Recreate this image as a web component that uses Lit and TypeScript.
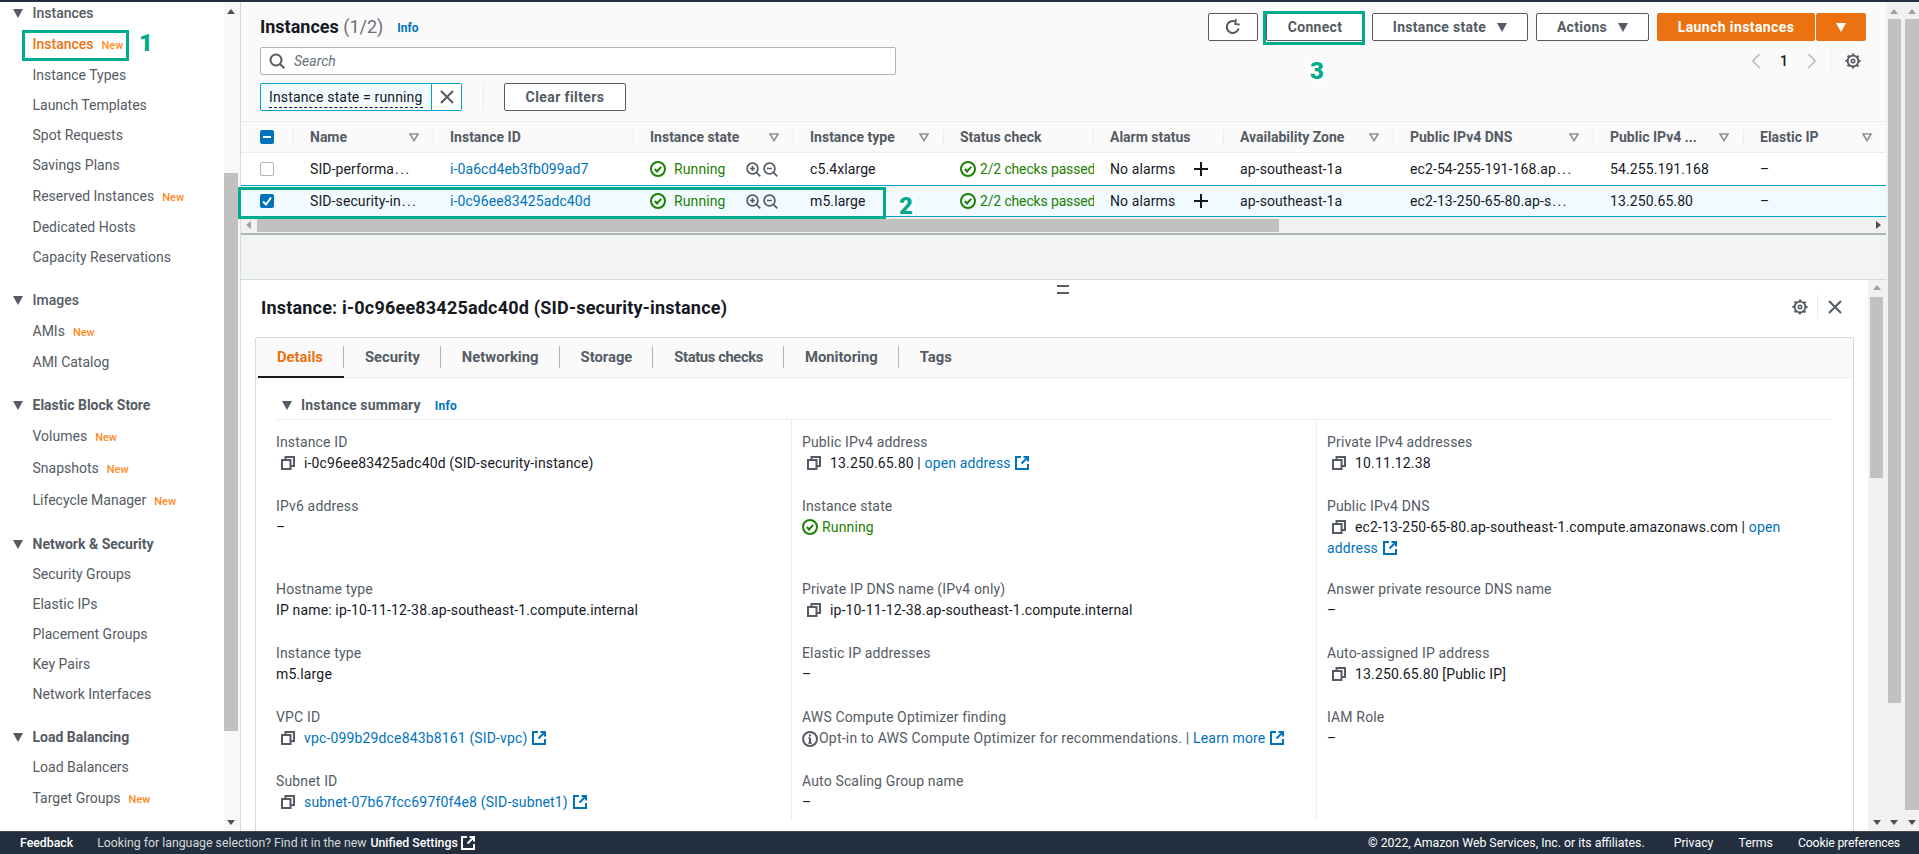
import { LitElement, html, css, svg, TemplateResult } from "lit";
import { customElement } from "lit/decorators.js";

const copyIcon = html`<svg class="copy" viewBox="0 0 14 14" width="14" height="14" fill="none" stroke="#545b64" stroke-width="2"><rect x="1" y="4" width="8.5" height="9"/><path d="M4.5 4V1H13v9h-3.5"/></svg>`;
const extIcon = html`<svg class="ext" viewBox="0 0 14 14" width="14" height="14" fill="none" stroke="currentColor" stroke-width="2"><path d="M6 1H1v12h12V8"/><path d="M8.5 1H13v4.5M13 1 6.5 7.5"/></svg>`;
const okIcon = html`<svg class="ok" viewBox="0 0 16 16" width="16" height="16" fill="none" stroke="#1d8102" stroke-width="2"><circle cx="8" cy="8" r="7"/><path d="M4.8 8l2.3 2.4 4-4.6"/></svg>`;
const gearIcon = html`<svg viewBox="0 0 16 16" width="16" height="16" fill="none" stroke="#545b64"><circle cx="8" cy="8" r="5.4" stroke-width="1.9"/><circle cx="8" cy="8" r="1.7" stroke-width="1.6"/><circle cx="8" cy="8" r="6.8" stroke-width="1.6" stroke-dasharray="2.2 3.14" stroke-dashoffset="1.1"/></svg>`;
const filterIcon = html`<svg class="tri" viewBox="0 0 10 9" width="10" height="9" fill="none" stroke="#879596" stroke-width="1.7"><path d="M1 1h8L5 7.6z"/></svg>`;
const caret = (color: string) => html`<svg viewBox="0 0 10 9" width="10" height="9"><path d="M0 0h10L5 9z" fill=${color}/></svg>`;
const zoomGlass = (minus: boolean) => html`<svg viewBox="0 0 15 15" width="15" height="15" fill="none" stroke="#545b64" stroke-width="1.7"><circle cx="6.5" cy="6.5" r="5.4"/><path d="M10.5 10.5 14.3 14.3M4 6.5h5"/>${minus ? "" : svg`<path d="M6.5 4v5"/>`}</svg>`;
const plusIcon = html`<svg viewBox="0 0 14 14" width="14" height="14" stroke="#16191f" stroke-width="2"><path d="M7 0v14M0 7h14"/></svg>`;
const link = (t: string) => html`<a>${t}</a>`;
const cut = (t: string) => html`${t}<span class="dots">...</span>`;

type Row = { label: string; value: TemplateResult | string };

const details: Row[] = [
  { label: "Instance ID", value: html`${copyIcon}i-0c96ee83425adc40d (SID-security-instance)` },
  { label: "Public IPv4 address", value: html`${copyIcon}13.250.65.80 | <a>open address ${extIcon}</a>` },
  { label: "Private IPv4 addresses", value: html`${copyIcon}10.11.12.38` },
  { label: "IPv6 address", value: "–" },
  { label: "Instance state", value: html`<span class="run">${okIcon} Running</span>` },
  { label: "Public IPv4 DNS", value: html`${copyIcon}ec2-13-250-65-80.ap-southeast-1.compute.amazonaws.com | <a>open<br />address ${extIcon}</a>` },
  { label: "Hostname type", value: "IP name: ip-10-11-12-38.ap-southeast-1.compute.internal" },
  { label: "Private IP DNS name (IPv4 only)", value: html`${copyIcon}ip-10-11-12-38.ap-southeast-1.compute.internal` },
  { label: "Answer private resource DNS name", value: "–" },
  { label: "Instance type", value: "m5.large" },
  { label: "Elastic IP addresses", value: "–" },
  { label: "Auto-assigned IP address", value: html`${copyIcon}13.250.65.80 [Public IP]` },
  { label: "VPC ID", value: html`${copyIcon}<a>vpc-099b29dce843b8161 (SID-vpc) ${extIcon}</a>` },
  {
    label: "AWS Compute Optimizer finding",
    value: html`<span class="opt"><svg class="info" viewBox="0 0 16 16" width="16" height="16" fill="none" stroke="#545b64" stroke-width="2"><circle cx="8" cy="8" r="7"/><path d="M8 7v5M6.5 12h3M6.5 7H8M8 3.5v2"/></svg>Opt-in to AWS Compute Optimizer for recommendations. | </span><a>Learn more ${extIcon}</a>`,
  },
  { label: "IAM Role", value: "–" },
  { label: "Subnet ID", value: html`${copyIcon}<a>subnet-07b67fcc697f0f4e8 (SID-subnet1) ${extIcon}</a>` },
  { label: "Auto Scaling Group name", value: "–" },
];

const nav = [
  { title: "Instances", light: true, items: [["Instances", 1, 1], ["Instance Types"], ["Launch Templates"], ["Spot Requests"], ["Savings Plans"], ["Reserved Instances", 1], ["Dedicated Hosts"], ["Capacity Reservations"]] },
  { title: "Images", light: true, items: [["AMIs", 1], ["AMI Catalog"]] },
  { title: "Elastic Block Store", items: [["Volumes", 1], ["Snapshots", 1], ["Lifecycle Manager", 1]] },
  { title: "Network & Security", items: [["Security Groups"], ["Elastic IPs"], ["Placement Groups"], ["Key Pairs"], ["Network Interfaces"]] },
  { title: "Load Balancing", items: [["Load Balancers"], ["Target Groups", 1]] },
];

const columns = [
  ["Name", true], ["Instance ID", false], ["Instance state", true], ["Instance type", true], ["Status check", false],
  ["Alarm status", false], ["Availability Zone", true], ["Public IPv4 DNS", true], ["Public IPv4 ...", true], ["Elastic IP", true],
];

const rows = [
  { name: "SID-performa", id: "i-0a6cd4eb3fb099ad7", type: "c5.4xlarge", dns: "ec2-54-255-191-168.ap", ip: "54.255.191.168" },
  { name: "SID-security-in", id: "i-0c96ee83425adc40d", type: "m5.large", dns: "ec2-13-250-65-80.ap-s", ip: "13.250.65.80", selected: true },
];

@customElement("app-root")
export class AppRoot extends LitElement {
  static styles = css`
    :host {
      display: block;
      position: relative;
      width: 100%;
      height: 100vh;
      overflow: hidden;
      font-family: Roboto, "Noto Sans", sans-serif;
      font-size: 14px;
      line-height: 21px;
      color: #16191f;
      background: #fff;
    }
    a { color: #0073bb; text-decoration: none; }
    svg { flex: none; }

    .page { display: flex; flex-direction: column; height: 100%; }
    .strip { height: 2px; background: #232f3e; flex: none; }
    .middle { flex: 1; display: flex; min-height: 0; }

    .nav { width: 240px; flex: none; display: flex; border-right: 1px solid #d5dbdb; overflow: hidden; }
    .nav-list { width: 224px; flex: none; margin-top: -3.5px; }
    .group { margin-bottom: 13px; }
    .group-title { display: flex; align-items: center; height: 30px; padding-left: 13px; gap: 0; font-weight: 700; color: #545b64; }
    .group-title.light { font-weight: 500; }
    .group-title svg { margin-right: 9.5px; }
    .nav-item { display: flex; align-items: center; height: 30px; padding-left: 32.5px; color: #545b64; white-space: nowrap; }
    .nav-item.has-new { height: 32px; }
    .nav-item.active { color: #ec7211; font-weight: 500; }
    .new { font-size: 11px; color: #ff8a1f; margin-left: 8px; font-weight: 500; padding-top: 2px; }

    .vbar { position: relative; background: #f1f1f1; flex: none; display: flex; flex-direction: column; align-items: flex-start; }
    .vbar .up, .vbar .down { position: absolute; width: 0; height: 0; border-left: 4px solid transparent; border-right: 4px solid transparent; }
    .vbar .up { border-bottom: 5px solid #a0a0a0; top: 7px; }
    .vbar .down { border-top: 5px solid #505050; bottom: 6px; }
    .thumb { background: #c1c1c1; }
    .bar-nav { width: 16px; background: #f8f8f8; }
    .bar-nav .up { left: 3px; border-bottom-color: #505050; }
    .bar-nav .down { left: 3px; }
    .bar-nav .thumb { width: 13.5px; margin-top: 171px; height: 558px; }
    .bar-outer-a { width: 17px; }
    .bar-outer-a .up, .bar-outer-a .down { left: 4px; }
    .bar-outer-a .thumb { width: 13px; margin: 17px 0 0 2px; height: 684px; }
    .bar-outer-b { width: 16px; }
    .bar-outer-b .up, .bar-outer-b .down { left: 5px; }
    .bar-outer-b .thumb { width: 14px; margin: 17px 0 0 2px; height: 791px; }
    .bar-inner { width: 18px; }
    .bar-inner .up, .bar-inner .down { left: 5px; }
    .bar-inner .up { top: 5px; }
    .bar-inner .thumb { width: 13px; margin: 17px 0 0 2px; height: 181px; }

    .content { flex: 1; min-width: 0; display: flex; flex-direction: column; }

    .top { height: 231px; background: #fafafa; flex: none; border-bottom: 2px solid #aab7b8; }
    .toolbar { display: flex; justify-content: space-between; height: 119px; padding: 11px 20px 0 19px; box-sizing: border-box; }
    .tool-left { display: flex; flex-direction: column; }
    .title-row { display: flex; align-items: center; height: 28px; }
    .title-row h1 { margin: 0; font-size: 18px; font-weight: 700; line-height: 28px; }
    .title-row h1 span { font-weight: 400; color: #687078; }
    .title-row a { font-size: 12px; font-weight: 700; margin-left: 14px; padding-top: 3px; }
    .search { width: 636px; height: 28px; margin-top: 6px; box-sizing: border-box; display: flex; align-items: center; background: #fff; border: 1px solid #aab7b8; border-radius: 2px; padding-left: 8px; color: #687078; font-style: italic; }
    .search svg { margin-right: 9px; }
    .filter-row { display: flex; align-items: center; margin-top: 8px; height: 28px; }
    .token { display: flex; height: 28px; box-sizing: border-box; border: 1px solid #00a1c9; border-radius: 2px; background: #f1faff; }
    .token-text { width: 170px; box-sizing: border-box; padding: 3px 0 0 8px; white-space: nowrap; letter-spacing: 0.15px; }
    .token-text span { border-bottom: 1px dashed #16191f; display: inline-block; line-height: 19px; }
    .token-x { width: 29px; border-left: 1px solid #00a1c9; display: flex; align-items: center; justify-content: center; background: #fff; }
    .vsep { width: 1px; height: 28px; background: #eaeded; margin: 0 20px 0 21px; }

    .btn { height: 28px; box-sizing: border-box; border: 1px solid #545b64; border-radius: 2px; background: #fff; color: #545b64; font-weight: 700; display: flex; align-items: center; justify-content: center; white-space: nowrap; gap: 11px; letter-spacing: 0.3px; }
    .clear { width: 122px; letter-spacing: 0.4px; }
    .tool-right { display: flex; flex-direction: column; align-items: flex-end; }
    .actions { display: flex; gap: 8px; height: 28px; margin-top: 0; }
    .refresh { width: 50px; }
    .connect { width: 98px; }
    .istate { width: 156px; }
    .act { width: 113px; }
    .launch-group { display: flex; gap: 1px; }
    .primary { background: #ec7211; border-color: #ec7211; color: #fff; letter-spacing: 0.4px; }
    .launch { width: 158px; }
    .launch-drop { width: 50px; }
    .pager { display: flex; align-items: center; height: 28px; margin-top: 6px; padding-right: 5px; }
    .pager .num { width: 46px; text-align: center; font-weight: 500; }
    .pager .vline { width: 1px; height: 28px; background: #eaeded; margin: 0 14px 0 13px; }

    .thead, .trow { display: grid; grid-template-columns: 53px 140px 200px 160px 150px 150px 130px 170px 200px 150px 142px; align-items: center; }
    .thead { height: 30px; border-top: 1px solid #eaeded; border-bottom: 1px solid #eaeded; background: #fafafa; }
    .th { display: flex; align-items: center; justify-content: space-between; height: 16px; padding: 0 14px 0 16px; border-right: 1px solid #eaeded; font-weight: 700; color: #545b64; white-space: nowrap; box-sizing: border-box; }
    .th:last-child { border-right: 0; }
    .check-cell { padding-left: 19px; display: flex; align-items: center; height: 100%; }
    .th.check-cell { padding: 0 0 0 19px; height: 16px; }
    .cb { width: 14px; height: 14px; box-sizing: border-box; border-radius: 2px; border: 1px solid #aab7b8; background: #fff; display: flex; align-items: center; justify-content: center; }
    .cb.on { background: #0073bb; border-color: #0073bb; }

    .trow { height: 32px; background: #fff; letter-spacing: 0.1px; }
    .trow.sel { height: 30px; background: #f1faff; border-top: 1px solid #00a1c9; border-bottom: 1px solid #00a1c9; }
    .td { padding-left: 16px; white-space: nowrap; overflow: hidden; display: flex; align-items: center; }
    .dots { letter-spacing: 1.6px; margin-left: 1px; }
    .run { color: #1d8102; display: inline-flex; align-items: center; }
    .td .run { gap: 8px; }
    .zoomers { display: flex; gap: 1px; margin-left: 20px; }
    .zoomers svg + svg { margin-left: 1px; }
    .checks { color: #1d8102; display: flex; align-items: center; gap: 4px; letter-spacing: -0.15px; }
    .alarm-plus { margin-left: 19px; display: flex; }

    .hbar { height: 16px; background: #f1f1f1; display: flex; align-items: center; }
    .hbar .left, .hbar .right { width: 0; height: 0; border-top: 4px solid transparent; border-bottom: 4px solid transparent; }
    .hbar .left { border-right: 5px solid #a0a0a0; margin-left: 5px; }
    .hbar .right { border-left: 5px solid #505050; margin-right: 5px; margin-left: auto; }
    .hbar .hthumb { background: #c1c1c1; height: 13px; margin-left: 6px; width: 1022px; }

    .gap { height: 44px; background: #f2f3f3; border-bottom: 1px solid #d5dbdb; flex: none; }

    .bottom { flex: 1; min-height: 0; display: flex; position: relative; }
    .handle { position: absolute; left: 816px; top: 5px; width: 12px; height: 5px; border-top: 2px solid #545b64; border-bottom: 2px solid #545b64; }
    .panel { flex: 1; min-width: 0; padding: 0 14px; overflow: hidden; }
    .panel-head { height: 57px; display: flex; align-items: center; padding: 0 12px 3px 6px; box-sizing: border-box; justify-content: space-between; }
    .panel-head h2 { margin: 0; font-size: 18px; font-weight: 700; letter-spacing: 0.2px; }
    .panel-tools { display: flex; align-items: center; }
    .panel-tools .vline { width: 1px; height: 24px; background: #eaeded; margin: 0 10px 0 9px; }
    .card { border: 1px solid #d5dbdb; border-bottom: 0; border-radius: 2px 2px 0 0; height: 600px; }
    .tabs { display: flex; height: 39px; background: #fafafa; border-bottom: 1px solid #eaeded; padding-left: 2px; }
    .tab { display: flex; align-items: center; position: relative; padding: 0 21px; font-size: 14.8px; font-weight: 700; color: #545b64; }
    .tab::after { content: ""; position: absolute; right: 0; top: 8px; height: 22px; width: 1px; background: #aab7b8; }
    .tab:last-child::after { display: none; }
    .tab.active { color: #ec7211; padding: 0 21px 0 19px; }
    .tab.active::before { content: ""; position: absolute; left: 0; right: 0; bottom: -1px; height: 2px; background: #16191f; }
    .tab.tight { letter-spacing: -0.4px; }
    .summary { padding: 0 21px 0 20px; }
    .summary-head { display: flex; align-items: center; height: 27px; padding: 14px 0 0 6px; border-bottom: 1px solid #eaeded; font-weight: 700; color: #545b64; letter-spacing: 0.2px; }
    .summary-head svg { margin-right: 9px; }
    .summary-head a { font-size: 12px; margin-left: 14px; padding-top: 2px; }
    .grid { display: grid; grid-template-columns: 515px 525px 516px; letter-spacing: 0.15px; }
    .cell { padding: 0 0 22px 0; min-height: 0; }
    .cell:nth-child(3n + 2), .cell:nth-child(3n) { border-left: 1px solid #eaeded; padding-left: 10px; }
    .cell:nth-child(-n + 3) { padding-top: 11.6px; }
    .cell:nth-child(n + 4):nth-child(-n + 6) { padding-bottom: 20.4px; }
    .cell:nth-child(n + 16) { padding-bottom: 8px; }
    .label { color: #545b64; }
    .value { color: #16191f; }
    .copy { margin: 0 9px 0 5px; vertical-align: -2px; }
    .ext { vertical-align: -2px; margin-left: 1px; }
    .ok { vertical-align: -3px; }
    .value > .run { gap: 4px; }
    .opt { color: #545b64; letter-spacing: 0.22px; }
    .info { vertical-align: -4px; margin-right: 1px; }

    .footer { height: 23px; flex: none; background: #232f3e; border-top: 1px solid #414750; box-sizing: border-box; display: flex; align-items: center; padding: 0 19px 0 20px; color: #d5dbdb; font-size: 12.3px; white-space: nowrap; }
    .footer b { font-weight: 500; color: #fff; }
    .footer .lang { margin-left: 24px; display: flex; align-items: center; gap: 4px; }
    .footer .lang b { margin-left: 0; }
    .footer .ext { color: #fff; margin: 0 0 0 -1px; }
    .foot-right { margin-left: auto; display: flex; gap: 25px; color: #fff; }
    .foot-right .copyr { margin-right: 4px; }
    .foot-right .cookie { letter-spacing: -0.2px; }

    .mark { position: absolute; box-sizing: border-box; border: 3px solid #00ab8e; pointer-events: none; }
    .mark-1 { left: 22px; top: 30px; width: 107px; height: 31px; }
    .mark-2 { left: 238px; top: 187px; width: 648px; height: 32px; }
    .mark-3 { left: 1263px; top: 11px; width: 102px; height: 34px; }
    .digit { position: absolute; color: #00ab8e; font-weight: 900; font-size: 24px; line-height: 20px; background: #fff; border-radius: 5px; padding: 0 2px; }
    .digit-1 { left: 137px; top: 33px; }
    .digit-2 { left: 897px; top: 196px; }
    .digit-3 { left: 1308px; top: 61px; }
  `;

  renderNav() {
    return nav.map(
      (g) => html`<div class="group">
        <div class="group-title ${g.light ? "light" : ""}">${caret("#545b64")}${g.title}</div>
        ${g.items.map(
          (it) => html`<div class="nav-item ${it[1] ? "has-new" : ""} ${it[2] ? "active" : ""}">${it[0]}${it[1] ? html`<span class="new">New</span>` : ""}</div>`
        )}
      </div>`
    );
  }

  renderRow(r: (typeof rows)[number] & { selected?: boolean }) {
    return html`<div class="trow ${r.selected ? "sel" : ""}">
      <div class="check-cell">
        <div class="cb ${r.selected ? "on" : ""}">
          ${r.selected ? html`<svg viewBox="0 0 14 14" width="14" height="14" fill="none" stroke="#fff" stroke-width="2"><path d="M3 7.5l3 3 5-7"/></svg>` : ""}
        </div>
      </div>
      <div class="td"><span>${cut(r.name)}</span></div>
      <div class="td">${link(r.id)}</div>
      <div class="td"><span class="run">${okIcon}Running</span><span class="zoomers">${zoomGlass(false)}${zoomGlass(true)}</span></div>
      <div class="td">${r.type}</div>
      <div class="td"><span class="checks">${okIcon}2/2 checks passed</span></div>
      <div class="td">No alarms<span class="alarm-plus">${plusIcon}</span></div>
      <div class="td">ap-southeast-1a</div>
      <div class="td"><span>${cut(r.dns)}</span></div>
      <div class="td">${r.ip}</div>
      <div class="td">–</div>
    </div>`;
  }

  render() {
    return html`
      <div class="page">
        <div class="strip"></div>
        <div class="middle">
          <div class="nav">
            <div class="nav-list">${this.renderNav()}</div>
            <div class="vbar bar-nav"><i class="up"></i><div class="thumb"></div><i class="down"></i></div>
          </div>
          <div class="content">
            <div class="top">
              <div class="toolbar">
                <div class="tool-left">
                  <div class="title-row"><h1>Instances <span>(1/2)</span></h1><a>Info</a></div>
                  <div class="search">
                    <svg viewBox="0 0 16 16" width="16" height="16" fill="none" stroke="#545b64" stroke-width="2"><circle cx="7" cy="7" r="5.5"/><path d="M11 11l4.3 4.3"/></svg>
                    Search
                  </div>
                  <div class="filter-row">
                    <div class="token">
                      <div class="token-text"><span>Instance state = running</span></div>
                      <div class="token-x"><svg viewBox="0 0 14 14" width="14" height="14" stroke="#545b64" stroke-width="2"><path d="M1 1l12 12M13 1 1 13"/></svg></div>
                    </div>
                    <div class="vsep"></div>
                    <div class="btn clear">Clear filters</div>
                  </div>
                </div>
                <div class="tool-right">
                  <div class="actions">
                    <div class="btn refresh"><svg viewBox="0 0 16 16" width="16" height="16" fill="none" stroke="#545b64" stroke-width="2"><path d="M13.6 9.5A6 6 0 1 1 10 2.4"/><path d="M10.5 0 10.5 5 15 5" stroke-width="1.8" transform="rotate(8 10.5 3)"/></svg></div>
                    <div class="btn connect">Connect</div>
                    <div class="btn istate">Instance state ${caret("#545b64")}</div>
                    <div class="btn act">Actions ${caret("#545b64")}</div>
                    <div class="launch-group">
                      <div class="btn primary launch">Launch instances</div>
                      <div class="btn primary launch-drop">${caret("#fff")}</div>
                    </div>
                  </div>
                  <div class="pager">
                    <svg viewBox="0 0 10 18" width="10" height="16" fill="none" stroke="#aab7b8" stroke-width="1.6"><path d="M9 1 1.5 9 9 17"/></svg>
                    <span class="num">1</span>
                    <svg viewBox="0 0 10 18" width="10" height="16" fill="none" stroke="#aab7b8" stroke-width="1.6"><path d="M1 1l7.5 8L1 17"/></svg>
                    <span class="vline"></span>
                    ${gearIcon}
                  </div>
                </div>
              </div>
              <div class="thead">
                <div class="th check-cell"><div class="cb on"><svg viewBox="0 0 14 14" width="14" height="14" stroke="#fff" stroke-width="2"><path d="M3 7h8"/></svg></div></div>
                ${columns.map((c) => html`<div class="th">${c[0]}${c[1] ? filterIcon : ""}</div>`)}
              </div>
              ${rows.map((r) => this.renderRow(r))}
              <div class="hbar"><i class="left"></i><div class="hthumb"></div><i class="right"></i></div>
            </div>
            <div class="gap"></div>
            <div class="bottom">
              <div class="handle"></div>
              <div class="panel">
                <div class="panel-head">
                  <h2>Instance: i-0c96ee83425adc40d (SID-security-instance)</h2>
                  <div class="panel-tools">
                    ${gearIcon}
                    <span class="vline"></span>
                    <svg viewBox="0 0 14 14" width="14" height="14" stroke="#545b64" stroke-width="2"><path d="M1 1l12 12M13 1 1 13"/></svg>
                  </div>
                </div>
                <div class="card">
                  <div class="tabs">
                    <div class="tab active">Details</div>
                    <div class="tab">Security</div>
                    <div class="tab">Networking</div>
                    <div class="tab">Storage</div>
                    <div class="tab tight">Status checks</div>
                    <div class="tab">Monitoring</div>
                    <div class="tab">Tags</div>
                  </div>
                  <div class="summary">
                    <div class="summary-head">${caret("#545b64")}Instance summary<a>Info</a></div>
                    <div class="grid">
                      ${details.map((d) => html`<div class="cell"><div class="label">${d.label}</div><div class="value">${d.value}</div></div>`)}
                      <div class="cell"></div>
                    </div>
                  </div>
                </div>
              </div>
              <div class="vbar bar-inner"><i class="up"></i><div class="thumb"></div><i class="down"></i></div>
            </div>
          </div>
          <div class="vbar bar-outer-a"><i class="up"></i><div class="thumb"></div><i class="down"></i></div>
          <div class="vbar bar-outer-b"><i class="up"></i><div class="thumb"></div><i class="down"></i></div>
        </div>
        <div class="footer">
          <b>Feedback</b>
          <span class="lang">Looking for language selection? Find it in the new <b>Unified Settings</b>${extIcon}</span>
          <span class="foot-right"><span class="copyr">© 2022, Amazon Web Services, Inc. or its affiliates.</span><span>Privacy</span><span>Terms</span><span class="cookie">Cookie preferences</span></span>
        </div>
      </div>
      <div class="mark mark-1"></div>
      <div class="mark mark-2"></div>
      <div class="mark mark-3"></div>
      <span class="digit digit-1">1</span>
      <span class="digit digit-2">2</span>
      <span class="digit digit-3">3</span>
    `;
  }
}
